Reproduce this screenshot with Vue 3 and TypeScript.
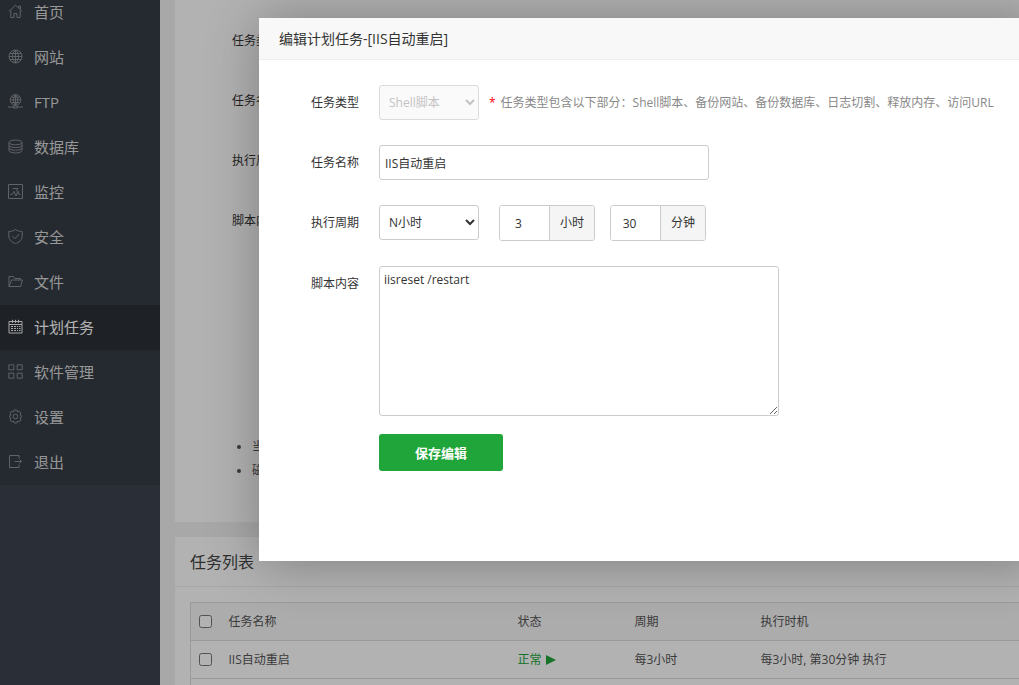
<script setup lang="ts">
import { ref } from 'vue'

interface MenuItem {
  icon: string
  label: string
  active?: boolean
}

const menu: MenuItem[] = [
  { icon: 'home', label: '首页' },
  { icon: 'globe', label: '网站' },
  { icon: 'ftp', label: 'FTP' },
  { icon: 'database', label: '数据库' },
  { icon: 'monitor', label: '监控' },
  { icon: 'shield', label: '安全' },
  { icon: 'folder', label: '文件' },
  { icon: 'calendar', label: '计划任务', active: true },
  { icon: 'grid', label: '软件管理' },
  { icon: 'gear', label: '设置' },
  { icon: 'exit', label: '退出' },
]

const icons: Record<string, string> = {
  home: 'M.8 7.5 7.5 1.2 14.2 7.5M2.8 6.5V13.5H6V9.5H9V13.5H12.2V6.5M10.8 4V2H12.5V5.5',
  globe: 'M7.5 1A6.5 6.5 0 1 0 7.5 14A6.5 6.5 0 1 0 7.5 1M7.5 1V14M1 7.5H14M2 4.5H13M2 10.5H13M7.5 1C3.5 4.5 3.5 10.5 7.5 14M7.5 1C11.5 4.5 11.5 10.5 7.5 14',
  ftp: 'M7.5 .6A5.3 5.3 0 1 0 7.5 11.2A5.3 5.3 0 1 0 7.5 .6M7.5 .6V12M2.3 5.8H12.7M3.5 3.3H11.5M3.5 8.5H11.5M7.5 .6C4.5 3.5 4.5 8 7.5 11M7.5 .6C10.5 3.5 10.5 8 7.5 11M0 13H5.5M9.5 13H15M5.5 12H9.5V14H5.5Z',
  database: 'M1 3.5C1 .3 14 .3 14 3.5C14 6.5 1 6.5 1 3.5V11.5C1 14.7 14 14.7 14 11.5V3.5M1 6.3C1 9.3 14 9.3 14 6.3M1 9C1 12 14 12 14 9',
  monitor: 'M.5 .5H14.5V14.5H.5ZM2.5 10.5H4L6 7.5 8 12 10 7 11 10.5H12.5M4.5 4.5H10L8 7',
  shield: 'M7.5 .5C5.5 2 3.3 2.4 .8 2.5V7C.8 11 4 13.3 7.5 14.8C11 13.3 14.2 11 14.2 7V2.5C11.7 2.4 9.5 2 7.5 .5M4.3 7 7 9.7 11.2 5',
  folder: 'M1 12.5V2.5H5.5L7 4.5H12.5V6M1 12.5 3.6 6H14.4L12.6 12.5Z',
  calendar: 'M1 2.5H14V14H1ZM1 5.5H14M4.5 .8V4M7.5 .8V4M10.5 .8V4M3 7.5H5M6 7.5H8M9 7.5H10M11 7.5H12.5M3 9.5H5M6 9.5H8M9 9.5H10M11 9.5H12.5M3 11.5H5M6 11.5H8M9 11.5H10M11 11.5H12.5',
  grid: 'M.8 .8H5.8V5.8H.8ZM9.2 .8H14.2V5.8H9.2ZM.8 9.2H5.8V14.2H.8ZM9.2 9.2H14.2V14.2H9.2Z',
  gear: 'M6.2 1H8.8L9.4 3 11.4 2.3 13 4.1 12 6 14 7.5 12 9 13 11 11.4 12.8 9.4 12 8.8 14H6.2L5.6 12 3.6 12.8 2 11 3 9 1 7.5 3 6 2 4.1 3.6 2.3 5.6 3ZM7.5 5.2A2.3 2.3 0 1 0 7.5 9.8A2.3 2.3 0 1 0 7.5 5.2',
  exit: 'M11 4.5V1.5H1.5V13.5H11V10.5M6.5 7.5H13.5M11.5 5.5 13.5 7.5 11.5 9.5',
}

const pageLabels = ['任务类型', '任务名称', '执行周期', '脚本内容']
const tips = ['当添加完备份任务', '磁盘容量不够']

const taskName = ref('IIS自动重启')
const hours = ref('3')
const minutes = ref('30')
const script = ref('iisreset /restart')
</script>

<template>
  <div class="app">
    <aside class="sidebar">
      <nav class="menu">
        <a v-for="item in menu" :key="item.label" href="#" class="menu-item" :class="{ active: item.active }">
          <svg class="menu-icon" viewBox="0 0 15 15" aria-hidden="true"><path :d="icons[item.icon]" /></svg>
          <span>{{ item.label }}</span>
        </a>
      </nav>
    </aside>

    <main class="content">
      <section class="card add-card">
        <div class="page-fields">
          <p v-for="label in pageLabels" :key="label">{{ label }}</p>
        </div>
        <ul class="tips">
          <li v-for="tip in tips" :key="tip">{{ tip }}</li>
        </ul>
      </section>
      <section class="card list-card">
        <h2>任务列表</h2>
        <div class="table-wrap">
          <table>
            <colgroup>
              <col class="c-check" />
              <col class="c-name" />
              <col class="c-state" />
              <col class="c-cycle" />
              <col />
            </colgroup>
            <thead>
              <tr>
                <th><input type="checkbox" aria-label="全选" /></th>
                <th>任务名称</th>
                <th>状态</th>
                <th>周期</th>
                <th>执行时机</th>
              </tr>
            </thead>
            <tbody>
              <tr>
                <td><input type="checkbox" aria-label="IIS自动重启" /></td>
                <td>IIS自动重启</td>
                <td>
                  <a href="#" class="state">正常
                    <svg viewBox="0 0 10 10" aria-hidden="true"><path d="M0 0 10 5 0 10Z" /></svg>
                  </a>
                </td>
                <td>每3小时</td>
                <td>每3小时, 第30分钟 执行</td>
              </tr>
              <tr>
                <td></td>
                <td></td>
                <td></td>
                <td></td>
                <td></td>
              </tr>
            </tbody>
          </table>
        </div>
      </section>
    </main>

    <div class="shade"></div>

    <div class="dialog" role="dialog" aria-labelledby="dialog-title">
      <h1 id="dialog-title">编辑计划任务-[IIS自动重启]</h1>
      <form class="form" @submit.prevent>
        <div class="row">
          <label for="type">任务类型</label>
          <select id="type" disabled>
            <option>Shell脚本</option>
          </select>
          <p class="hint"><b>*</b>任务类型包含以下部分：Shell脚本、备份网站、备份数据库、日志切割、释放内存、访问URL</p>
        </div>
        <div class="row">
          <label for="name">任务名称</label>
          <input id="name" v-model="taskName" class="name" type="text" />
        </div>
        <div class="row">
          <label for="cycle">执行周期</label>
          <select id="cycle">
            <option>N小时</option>
          </select>
          <div class="group first">
            <input id="hours" v-model="hours" type="text" />
            <label for="hours">小时</label>
          </div>
          <div class="group">
            <input id="minutes" v-model="minutes" type="text" />
            <label for="minutes">分钟</label>
          </div>
        </div>
        <div class="row script-row">
          <label for="script">脚本内容</label>
          <textarea id="script" v-model="script" spellcheck="false"></textarea>
        </div>
        <button type="submit">保存编辑</button>
      </form>
    </div>
  </div>
</template>

<style>
body {
  overflow: hidden;
}
</style>

<style scoped>
.app,
.app * {
  box-sizing: border-box;
}
.app {
  position: relative;
  display: flex;
  height: 100vh;
  overflow: hidden;
  background: #f1f1f1;
  color: #333;
  font: 12px/18px "Open Sans", "Noto Sans CJK SC", sans-serif;
}
.app input,
.app select,
.app textarea,
.app button {
  font-family: inherit;
  font-size: 12px;
  color: inherit;
}
h1,
h2,
p,
ul {
  margin: 0;
  padding: 0;
  font-weight: 400;
}

.sidebar {
  flex: none;
  width: 160px;
  background: #3d4350;
}
.menu {
  margin-top: -10px;
  background: #363d46;
}
.menu-item {
  display: flex;
  align-items: center;
  gap: 11px;
  height: 45px;
  padding: 0 8px 2px;
  color: #d8d8d8;
  font-size: 15px;
  text-decoration: none;
}
.menu-item.active {
  background: #2c3036;
  color: #fff;
}
.menu-icon {
  width: 15px;
  height: 15px;
  fill: none;
  stroke: #888d93;
  stroke-width: 1;
}
.active .menu-icon {
  stroke: #eee;
}

.content {
  flex: 1 0 900px;
  padding: 0 15px;
}
.card {
  background: #fff;
}
.add-card {
  height: 522px;
  margin-bottom: 15px;
  padding: 11px 57px;
}
.page-fields {
  display: grid;
  grid-auto-rows: 60px;
  line-height: 60px;
  height: 424px;
}
.tips {
  padding-left: 20px;
  color: #555;
  line-height: 24px;
}
.list-card {
  height: 400px;
}
.list-card h2 {
  height: 50px;
  padding-left: 15px;
  border-bottom: 1px solid #eee;
  color: #444;
  font-size: 16px;
  line-height: 50px;
}
.table-wrap {
  padding: 15px;
}
table {
  width: 100%;
  table-layout: fixed;
  border: 1px solid #ddd;
  border-collapse: collapse;
  color: #555;
}
.c-check {
  width: 30px;
}
.c-name {
  width: 289px;
}
.c-state {
  width: 117px;
}
.c-cycle {
  width: 126px;
}
tr {
  height: 38px;
  border-bottom: 1px solid #ddd;
}
thead {
  background: #f6f6f6;
}
th,
td {
  padding: 0 8px;
  font-weight: 400;
  text-align: left;
  vertical-align: middle;
}
td input,
th input {
  display: block;
  width: 13px;
  height: 13px;
  margin: 0;
}
.state {
  display: flex;
  align-items: center;
  gap: 4px;
  color: #20a53a;
  text-decoration: none;
}
.state svg {
  width: 10px;
  height: 10px;
  fill: #20a53a;
}

.shade {
  position: absolute;
  inset: 0;
  background: rgba(0, 0, 0, 0.3);
}

.dialog {
  position: absolute;
  top: 18px;
  right: -20px;
  left: 259px;
  padding-bottom: 90px;
  background: #fff;
  box-shadow: 1px 1px 50px rgba(0, 0, 0, 0.3);
}
.dialog h1 {
  height: 42px;
  padding-left: 20px;
  border-bottom: 1px solid #eee;
  background: #f8f8f8;
  font-size: 14px;
  line-height: 42px;
}
.form {
  padding-top: 25px;
}
.row {
  display: flex;
  align-items: flex-start;
  margin-bottom: 25px;
}
.row > label {
  width: 100px;
  margin-right: 20px;
  line-height: 35px;
  text-align: right;
}
.row > select {
  width: 100px;
  height: 35px;
  padding-left: 5px;
  border: 1px solid #ccc;
  border-radius: 3px;
  background-color: #fff;
}
.row > select:disabled {
  color: #aaa;
  background-color: #f8f8f8;
}
.hint {
  padding-left: 10px;
  color: #888;
  line-height: 35px;
  white-space: nowrap;
}
.hint b {
  margin-right: 5px;
  color: #f00;
  font-weight: 400;
}
.name {
  width: 330px;
  height: 35px;
  padding: 0 5px;
  border: 1px solid #ccc;
  border-radius: 3px;
}
.group {
  display: flex;
  width: 96px;
  height: 36px;
  margin-left: 15px;
  overflow: hidden;
  border: 1px solid #ccc;
  border-radius: 3px;
}
.group.first {
  margin-left: 20px;
}
.group input {
  width: 50px;
  padding: 0 18px 0 6px;
  border: 0;
  border-right: 1px solid #ccc;
  text-align: center;
}
.group label {
  flex: 1;
  background: #f5f5f5;
  line-height: 34px;
  text-align: center;
}
.script-row {
  margin-bottom: 18px;
}
textarea {
  display: block;
  width: 400px;
  height: 150px;
  padding: 4px;
  border: 1px solid #ccc;
  border-radius: 3px;
  line-height: 18px;
}
.app button {
  display: block;
  width: 124px;
  height: 37px;
  margin-left: 120px;
  border: 0;
  border-radius: 3px;
  background: #20a53a;
  color: #fff;
  font-size: 13px;
  font-weight: 700;
}
</style>
